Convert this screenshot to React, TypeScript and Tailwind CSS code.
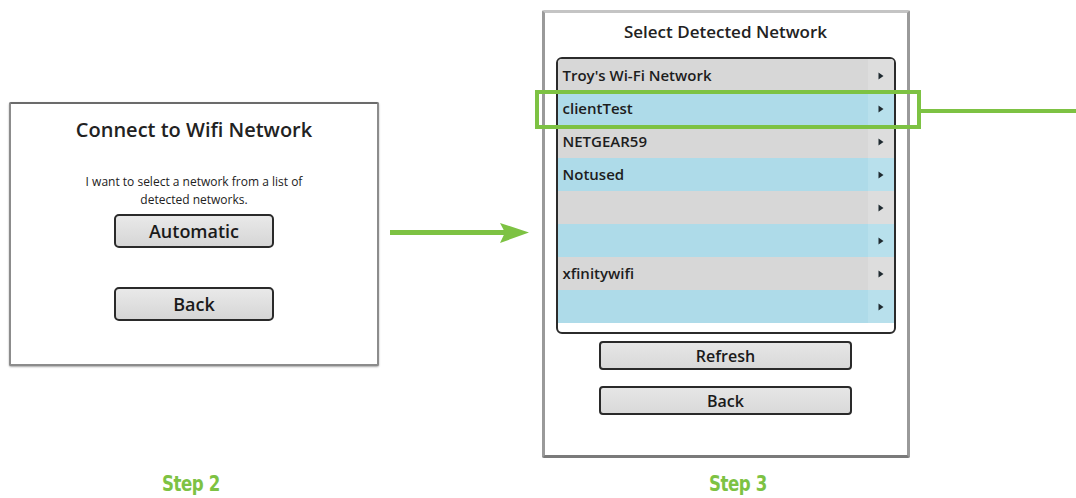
import React from "react";

const font = { fontFamily: '"Open Sans", "Liberation Sans", sans-serif' };
const stepFont = {
  fontFamily: '"DejaVu Sans Condensed", "DejaVu Sans", sans-serif',
  fontStretch: "condensed" as const,
};

function Tri() {
  return (
    <svg width="6" height="8" viewBox="0 0 6 8" className="block">
      <path d="M0.5 0.5 L5.5 4 L0.5 7.5 Z" fill="#1f2a30" />
    </svg>
  );
}

const rows: { name: string; blue: boolean }[] = [
  { name: "Troy's Wi-Fi Network", blue: false },
  { name: "clientTest", blue: true },
  { name: "NETGEAR59", blue: false },
  { name: "Notused", blue: true },
  { name: "", blue: false },
  { name: "", blue: true },
  { name: "xfinitywifi", blue: false },
  { name: "", blue: true },
];

export default function App() {
  return (
    <div
      className="relative w-[1076px] h-[498px] bg-white overflow-hidden flex flex-row items-start text-[#1a1a1a]"
      style={font}
    >
      {/* Step 2 column */}
      <div className="flex flex-col items-center pl-[9px] w-[379px]">
        <div className="mt-[102px] w-[370px] h-[264px] bg-white border-2 border-[#8c8c8c] border-t-[#6b6b6b] rounded-[2px] shadow-[0_1px_2px_rgba(0,0,0,0.35)] flex flex-col items-center">
          <div className="mt-[14px] text-[20px] leading-[24px] font-semibold text-[#222]">
            Connect to Wifi Network
          </div>
          <div className="mt-[31px] text-[12px] leading-[18px] text-center text-[#222]">
            I want to select a network from a list of
            <br />
            detected networks.
          </div>
          <div className="mt-[5px] w-[160px] h-[34px] rounded-[5px] border-2 border-[#2a2a2a] bg-gradient-to-b from-[#e9e9e9] to-[#d6d6d6] flex items-center justify-center text-[18px] font-semibold">
            Automatic
          </div>
          <div className="mt-[39px] w-[160px] h-[34px] rounded-[5px] border-2 border-[#2a2a2a] bg-gradient-to-b from-[#e9e9e9] to-[#d6d6d6] flex items-center justify-center text-[18px] font-semibold">
            Back
          </div>
        </div>
        <div
          className="mt-[106px] ml-[-6px] text-[21px] leading-[24px] font-bold text-[#7dc243] tracking-[-0.5px] scale-x-[0.88]"
          style={stepFont}
        >
          Step 2
        </div>
      </div>

      {/* Arrow */}
      <svg width="140" height="22" viewBox="0 0 140 22" className="mt-[222px] ml-[11px] shrink-0">
        <rect x="0" y="8" width="116" height="5" fill="#7dc243" />
        <path d="M110 1 L139 10.5 L110 21 L115 10.5 Z" fill="#7dc243" />
      </svg>

      {/* Step 3 column */}
      <div className="flex flex-col items-center ml-[11px] w-[369px]">
        <div className="mt-[10px] w-[368px] h-[448px] bg-white border-[3px] border-[#9a9a9a] border-t-[#c4c4c4] border-b-[#7a7a7a] rounded-[2px] flex flex-col items-center">
          <div className="mt-[8px] text-[17px] leading-[22px] font-semibold text-[#222]">
            Select Detected Network
          </div>
          <div className="mt-[14px] w-[340px] h-[277px] rounded-[6px] border-2 border-[#2b2b2b] bg-white overflow-hidden flex flex-col">
            {rows.map((r, i) => (
              <div
                key={i}
                className={
                  "h-[33px] shrink-0 flex flex-row items-center " +
                  (r.blue ? "bg-[#aedbe9]" : "bg-[#d7d7d7]")
                }
              >
                <div className="flex-1 pl-[5px] text-[15px] font-semibold text-[#1d1d1d] truncate">
                  {r.name}
                </div>
                <div
                  className={
                    "w-[26px] h-full flex items-center justify-center " +
                    (r.blue ? "bg-[#b8e0ec]" : "bg-[#dddddd]")
                  }
                >
                  <Tri />
                </div>
              </div>
            ))}
          </div>
          <div className="mt-[7px] w-[253px] h-[29px] rounded-[4px] border-2 border-[#2a2a2a] bg-gradient-to-b from-[#e6e6e6] to-[#d9d9d9] flex items-center justify-center text-[16px] font-semibold">
            Refresh
          </div>
          <div className="mt-[16px] w-[253px] h-[29px] rounded-[4px] border-2 border-[#2a2a2a] bg-gradient-to-b from-[#e6e6e6] to-[#d9d9d9] flex items-center justify-center text-[16px] font-semibold">
            Back
          </div>
        </div>
        <div
          className="mt-[14px] ml-[24px] text-[21px] leading-[24px] font-bold text-[#7dc243] tracking-[-0.5px] scale-x-[0.88]"
          style={stepFont}
        >
          Step 3
        </div>
      </div>

      {/* Highlight box and callout line */}
      <div className="absolute left-[535px] top-[90px] w-[386px] h-[39px] border-[4px] border-[#7dc243]" />
      <div className="absolute left-[920px] top-[109px] w-[156px] h-[4px] bg-[#7dc243]" />
    </div>
  );
}
